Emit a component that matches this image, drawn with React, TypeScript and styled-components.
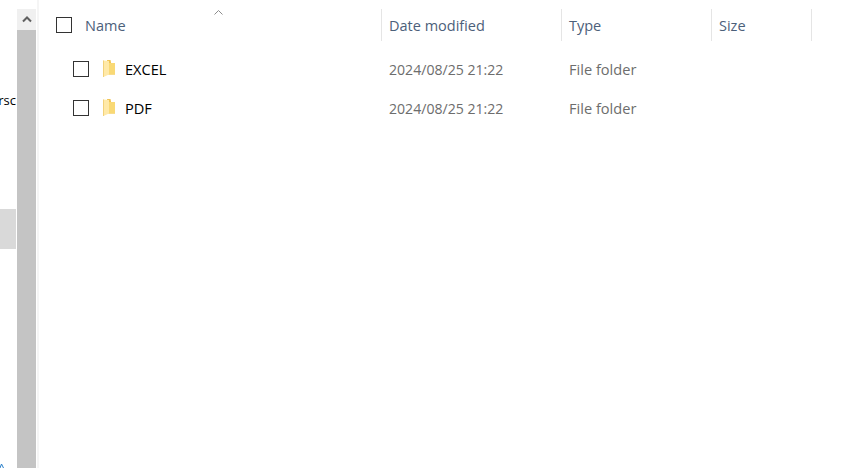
import styled, { createGlobalStyle } from 'styled-components';

const GlobalStyle = createGlobalStyle`
    html, body {
        margin: 0;
        background: #fff;
        overflow: hidden;
    }
    body {
        font-family: "Open Sans", "Noto Sans", sans-serif;
    }
`;

const Window = styled.div`
    display: flex;
    width: 861px;
    height: 468px;
    overflow: hidden;
`;

const NavPane = styled.div`
    position: relative;
    width: 16px;
    margin-right: 1px;
    flex: none;
    display: flex;
    flex-direction: column;
    overflow: hidden;
`;

const NavLabel = styled.div`
    display: flex;
    justify-content: flex-end;
    margin-top: 90px;
    height: 20px;
    line-height: 20px;
    font-size: 13px;
    color: #000;
    white-space: nowrap;
`;

const NavSelected = styled.div`
    margin-top: 99px;
    height: 40px;
    background: #d9d9d9;
`;

const NavIconTip = styled.svg`
    position: absolute;
    left: 0;
    bottom: 0;
`;

const Scrollbar = styled.div`
    width: 19px;
    flex: none;
    padding-top: 9px;
    display: flex;
    flex-direction: column;
`;

const ScrollArrow = styled.div`
    height: 21px;
    background: #f0f0f0;
    display: flex;
    align-items: center;
    justify-content: center;
`;

const ScrollThumb = styled.div`
    flex: 1;
    background: #c4c4c4;
`;

const PaneEdge = styled.div`
    width: 2px;
    margin-left: 1px;
    flex: none;
    background: #f5f5f5;
`;

const List = styled.div`
    flex: 1;
    padding-top: 9px;
`;

const HeaderRow = styled.div`
    position: relative;
    display: flex;
    height: 32px;
    font-size: 14.5px;
    color: #4c607a;
`;

const SortCaret = styled.svg`
    position: absolute;
    left: 175px;
    top: 1px;
`;

const HeaderCell = styled.div<{ $width: number; $first?: boolean }>`
    width: ${(p) => p.$width}px;
    flex: none;
    box-sizing: border-box;
    display: flex;
    align-items: center;
    padding-left: ${(p) => (p.$first ? 17 : 7)}px;
    border-right: 1px solid #e5e5e5;
    ${(p) => p.$first && 'gap: 13px;'}
`;

const Rows = styled.div`
    display: flex;
    flex-direction: column;
    gap: 19px;
    margin-top: 18px;
`;

const Row = styled.div`
    display: flex;
    align-items: center;
    height: 20px;
`;

const NameCell = styled.div`
    width: 342px;
    flex: none;
    box-sizing: border-box;
    padding-left: 34px;
    display: flex;
    align-items: center;
    font-size: 14.6px;
    color: #000;
`;

const Check = styled.span`
    display: block;
    width: 16px;
    height: 16px;
    box-sizing: border-box;
    border: 1px solid #333;
    background: #fff;
    flex: none;
`;

const FolderIcon = styled.svg`
    margin: -2px 10px 0 14px;
    flex: none;
`;

const DateCell = styled.div`
    width: 180px;
    flex: none;
    box-sizing: border-box;
    padding-left: 8px;
    font-size: 14.1px;
    color: #6d6d6d;
`;

const TypeCell = styled.div`
    width: 150px;
    flex: none;
    box-sizing: border-box;
    padding-left: 8px;
    font-size: 14.6px;
    color: #6d6d6d;
`;

const Folder = () => (
    <FolderIcon width="12" height="17" viewBox="0 0 12 17">
        <path d="M4 0h3.500l1 5H12v9.500H4z" fill="#f0c455" />
        <path d="M6 3h6v11.500H6z" fill="#f9d975" />
        <path d="M0 .5 6 1v13.500L1 16.800 0 16z" fill="#ffe9a8" />
        <path d="M0 .5h1V17H0z" fill="#f3d27a" />
    </FolderIcon>
);

const folders = ['EXCEL', 'PDF'];

const App = () => (
    <Window>
        <GlobalStyle />
        <NavPane>
            <NavLabel>rsc</NavLabel>
            <NavSelected />
            <NavIconTip width="4" height="4" viewBox="0 0 4 4">
                <path d="M0 4 1.500 0 3.500 4" fill="none" stroke="#2a7fc9" strokeWidth="1" />
            </NavIconTip>
        </NavPane>
        <Scrollbar>
            <ScrollArrow>
                <svg width="10" height="7" viewBox="0 0 10 7">
                    <path d="M1 5.500 5 1.500 9 5.500" fill="none" stroke="#606060" strokeWidth="2" />
                </svg>
            </ScrollArrow>
            <ScrollThumb />
        </Scrollbar>
        <PaneEdge />
        <List>
            <HeaderRow>
                <SortCaret width="9" height="5" viewBox="0 0 9 5">
                    <path d="M.5 4.500 4.500 .5 8.500 4.500" fill="none" stroke="#8c8c8c" strokeWidth="1" />
                </SortCaret>
                <HeaderCell $width={343} $first>
                    <Check />
                    Name
                </HeaderCell>
                <HeaderCell $width={180}>Date modified</HeaderCell>
                <HeaderCell $width={150}>Type</HeaderCell>
                <HeaderCell $width={100}>Size</HeaderCell>
            </HeaderRow>
            <Rows>
                {folders.map((name) => (
                    <Row key={name}>
                        <NameCell>
                            <Check />
                            <Folder />
                            {name}
                        </NameCell>
                        <DateCell>2024/08/25 21:22</DateCell>
                        <TypeCell>File folder</TypeCell>
                    </Row>
                ))}
            </Rows>
        </List>
    </Window>
);

export default App;
